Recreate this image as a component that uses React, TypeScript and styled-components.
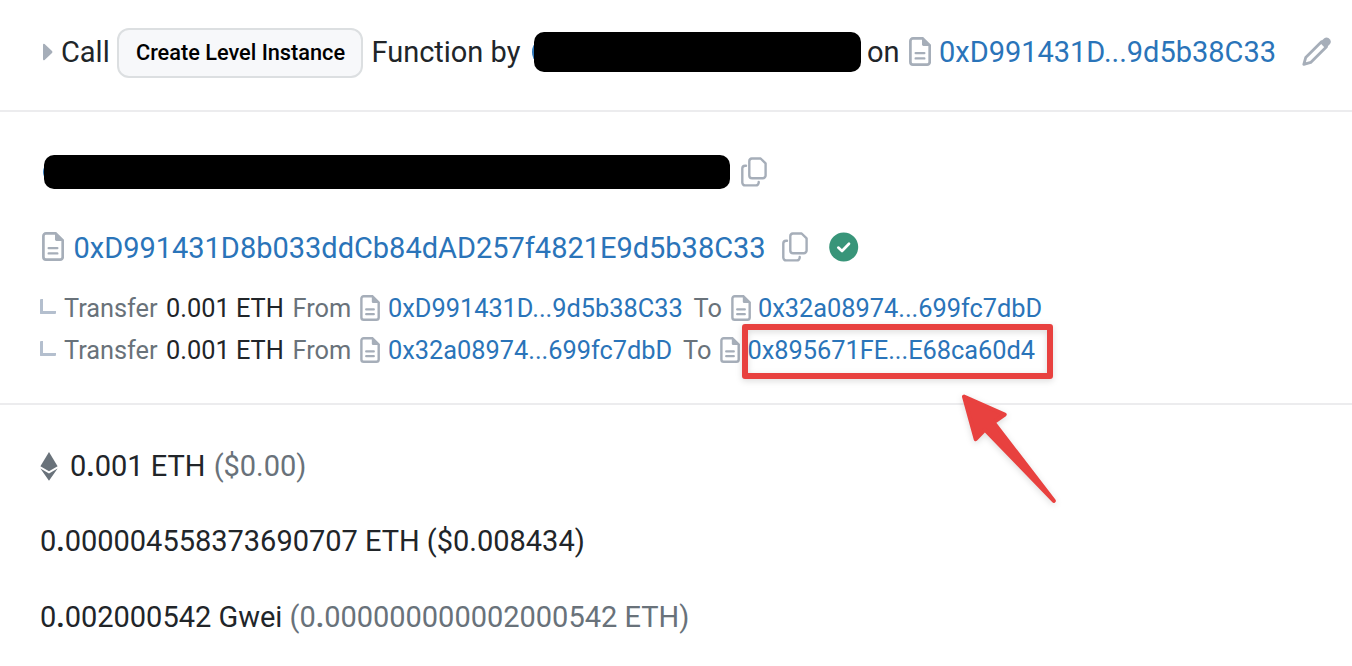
import React from 'react';
import styled, { createGlobalStyle } from 'styled-components';

const GlobalStyle = createGlobalStyle`
  body { margin: 0; background: #fff; overflow: hidden; }
  * { box-sizing: border-box; }
`;

const Page = styled.main`
  width: 1352px;
  height: 666px;
  display: flex;
  flex-direction: column;
  background: #fff;
  color: #212529;
  font-family: Roboto, 'Liberation Sans', sans-serif;
  font-size: 29px;
  position: relative;
`;

const Section = styled.section<{ $height: number; $top: number }>`
  height: ${(p) => p.$height}px;
  padding: ${(p) => p.$top}px 0 0 40px;
  flex: none;
  display: flex;
  flex-direction: column;
  & + & { border-top: 2px solid #ececee; }
`;

const Row = styled.div<{ $height: number; $small?: boolean; $mt?: number }>`
  height: ${(p) => p.$height}px;
  margin-top: ${(p) => p.$mt ?? 0}px;
  flex: none;
  display: flex;
  align-items: center;
  white-space: pre;
  font-size: ${(p) => (p.$small ? '25.375px' : '29px')};
  line-height: ${(p) => p.$height}px;
  letter-spacing: -0.015px;
  svg { flex: none; display: block; }
`;

const Text = styled.span<{ $ml?: number; $w?: number; $muted?: boolean }>`
  margin-left: ${(p) => p.$ml ?? 0}px;
  width: ${(p) => (p.$w ? `${p.$w}px` : 'auto')};
  flex: none;
  color: ${(p) => (p.$muted ? '#69727a' : 'inherit')};
`;

const Address = styled.a<{ $w: number; $ml: number; $mt?: number }>`
  margin-left: ${(p) => p.$ml}px;
  margin-top: ${(p) => p.$mt ?? 0}px;
  width: ${(p) => p.$w}px;
  flex: none;
  color: #2a74b9;
  text-decoration: none;
`;

const MethodTag = styled.span`
  width: 246px;
  height: 50px;
  margin: 2px 0 0 8px;
  padding-left: 1px;
  flex: none;
  display: flex;
  align-items: center;
  justify-content: center;
  border: 2px solid #dcdfe1;
  border-radius: 12px;
  background: #f7f8fa;
  color: #000;
  font-size: 21.75px;
  font-weight: 500;
`;

const Redacted = styled.span<{ $w: number; $h: number; $ml: number; $sliver: number }>`
  width: ${(p) => p.$w}px;
  height: ${(p) => p.$h}px;
  margin-left: ${(p) => p.$ml}px;
  flex: none;
  border-radius: 10px;
  background: #000;
  position: relative;
  &::before {
    content: '';
    position: absolute;
    z-index: -1;
    left: -${(p) => p.$sliver}px;
    top: 11px;
    width: 10px;
    height: ${(p) => p.$h - 22}px;
    border-radius: 5px / 10px;
    background: #3078bb;
  }
`;

const Layer = styled.div`
  position: relative;
  z-index: 0;
`;

const Gap = styled.i<{ $w: number }>`
  width: ${(p) => p.$w}px;
  flex: none;
`;

const Elbow = styled.i`
  width: 16px;
  height: 15px;
  margin-bottom: 4px;
  flex: none;
  border: solid #b4bfce;
  border-width: 0 0 3px 3px;
  border-radius: 1px;
`;

const TransferList = styled.div`
  margin-top: 20px;
`;

const HighlightBox = styled.div`
  position: absolute;
  left: 742px;
  top: 324px;
  width: 311px;
  height: 55px;
  border: 6px solid #e8413f;
  border-radius: 3px;
  filter: drop-shadow(0 2px 3px rgba(0, 0, 0, 0.14));
`;

const Arrow = styled.svg`
  position: absolute;
  left: 950px;
  top: 385px;
  overflow: visible;
  filter: drop-shadow(0 2px 3px rgba(0, 0, 0, 0.14));
`;

const IconSlot = styled.span`
  flex: none;
  margin-bottom: 1px;
`;

const DocIcon = ({ w = 22, h = 29 }: { w?: number; h?: number }) => (
  <svg width={w} height={h} viewBox="0 0 22 29" fill="none" stroke="#a6aeb9" strokeWidth="2.7">
    <path d="M4 1.4H13.6L20.7 8.4V25a2.6 2.6 0 0 1-2.6 2.6H4A2.6 2.6 0 0 1 1.4 25V4A2.6 2.6 0 0 1 4 1.4Z" />
    <path d="M13 1.2V7.6Q13 9 14.4 9H21Z" fill="#a6aeb9" stroke="none" />
    <path d="M6.7 16.1H15.3M6.7 21.4H15.3" strokeLinecap="round" strokeWidth="2.4" />
  </svg>
);

const CopyIcon = () => (
  <svg width="26" height="30" viewBox="0 0 26 30" fill="none" stroke="#a6aeb9" strokeWidth="2.4" strokeLinecap="round">
    <path d="M10.9 1.5H19.6L24.6 6.4V18.4a2.8 2.8 0 0 1-2.8 2.8H11.1a2.8 2.8 0 0 1-2.8-2.8V4.3a2.8 2.8 0 0 1 2.6-2.8Z" strokeLinejoin="round" />
    <path d="M5 8.8H4.1A2.8 2.8 0 0 0 1.3 11.6V25.6A2.8 2.8 0 0 0 4.1 28.4H14.9a2.8 2.8 0 0 0 2.8-2.8v-.7" />
  </svg>
);

const CaretIcon = () => (
  <svg width="10" height="18" viewBox="0 0 10 18">
    <path d="M0 2Q0 0 1.6 1L9 8Q10 9 9 10L1.6 17Q0 18 0 16Z" fill="#a6aeb9" />
  </svg>
);

const PencilIcon = () => (
  <svg width="30" height="30" viewBox="0 0 30 30" fill="none">
    <path d="M1.8 27.4L3.7 20.6L19.5 4.8L24.5 9.8L8.7 25.4Z" stroke="#a6aeb9" strokeWidth="2.8" strokeLinejoin="round" />
    <path d="M17.7 5.6L22.3 1.3Q24.5 -.4 26.8 1.3L28 2.5Q29.7 4.8 28 7L23.6 11.5Z" fill="#a6aeb9" />
  </svg>
);

const VerifiedIcon = () => (
  <svg width="30" height="30" viewBox="0 0 30 30" fill="none">
    <circle cx="14.7" cy="15" r="14.5" fill="#389579" />
    <path d="M9.3 15.6L13 19L20 11.8" stroke="#fff" strokeWidth="2.7" strokeLinecap="round" strokeLinejoin="round" />
  </svg>
);

const EtherIcon = () => (
  <svg width="18" height="29" viewBox="0 0 18 29" fill="#69727a">
    <path d="M9 0L17.6 14.3L9 19.2L.4 14.3Z" />
    <path d="M.4 16.6L9 21.4L17.6 16.6L9 28.7Z" />
  </svg>
);

const Amount = ({ whole, fraction }: { whole: string; fraction: string }) => (
  <>{whole}<b>.</b>{fraction}</>
);

const Transfer = ({ from, fromWidth, to }: { from: string; fromWidth: number; to: string }) => (
  <Row $height={42} $small>
    <Elbow />
    <Text $ml={8} $w={102} $muted>Transfer</Text>
    <Text $w={126.5}>0.001 ETH</Text>
    <Text $w={67.5} $muted>From</Text>
    <DocIcon w={20} h={26} />
    <Address $ml={8} $w={fromWidth}>{from}</Address>
    <Text $w={37} $muted>To</Text>
    <DocIcon w={20} h={26} />
    <Address $ml={7.5} $w={300}>{to}</Address>
  </Row>
);

export default function App() {
  return (
    <Page>
      <GlobalStyle />
      <Layer>
        <Section $height={110} $top={27}>
          <Row $height={50}>
            <Gap $w={3} />
            <CaretIcon />
            <Text $ml={8} $w={48}>Call</Text>
            <MethodTag>Create Level Instance</MethodTag>
            <Text $ml={8.5} $w={161.5}>Function by</Text>
            <Redacted $w={327} $h={40.5} $ml={0.5} $sliver={1.5} />
            <Text $ml={6.5} $w={42}>on</Text>
            <IconSlot><DocIcon /></IconSlot>
            <Address $ml={8} $w={362.5}>0xD991431D...9d5b38C33</Address>
            <PencilIcon />
          </Row>
        </Section>
        <Section $height={293} $top={42}>
          <Row $height={35}>
            <Redacted $w={686} $h={34} $ml={4} $sliver={0.6} />
            <Gap $w={10.5} />
            <CopyIcon />
          </Row>
          <Row $height={40} $mt={38}>
            <Gap $w={1.5} />
            <IconSlot><DocIcon /></IconSlot>
            <Address $ml={10} $w={708.5} $mt={2}>0xD991431D8b033ddCb84dAD257f4821E9d5b38C33</Address>
            <CopyIcon />
            <Gap $w={21} />
            <VerifiedIcon />
          </Row>
          <TransferList>
            <Transfer from="0xD991431D...9d5b38C33" fromWidth={305.5} to="0x32a08974...699fc7dbD" />
            <Transfer from="0x32a08974...699fc7dbD" fromWidth={295} to="0x895671FE...E68ca60d4" />
          </TransferList>
        </Section>
        <Section $height={263} $top={41}>
          <Row $height={40}>
            <EtherIcon />
            <Text $ml={12}><Amount whole="0" fraction="001 ETH " /></Text>
            <Text $ml={1} $muted>($0.00)</Text>
          </Row>
          <Row $height={40} $mt={35}>
            <Text><Amount whole="0" fraction="000004558373690707 ETH ($0.008434)" /></Text>
          </Row>
          <Row $height={40} $mt={36}>
            <Text><Amount whole="0" fraction="002000542 Gwei " /></Text>
            <Text $muted>(0<b>.</b>000000000002000542 ETH)</Text>
          </Row>
        </Section>
      </Layer>
      <HighlightBox />
      <Arrow width="110" height="125" viewBox="0 0 110 125">
        <path
          d="M14 11.6L54.7 29.5L43.6 37.4L103.8 115.8L34.9 44.6L25.7 54.2Z"
          fill="#e8413f"
          stroke="#e8413f"
          strokeWidth="4"
          strokeLinejoin="round"
        />
      </Arrow>
    </Page>
  );
}
